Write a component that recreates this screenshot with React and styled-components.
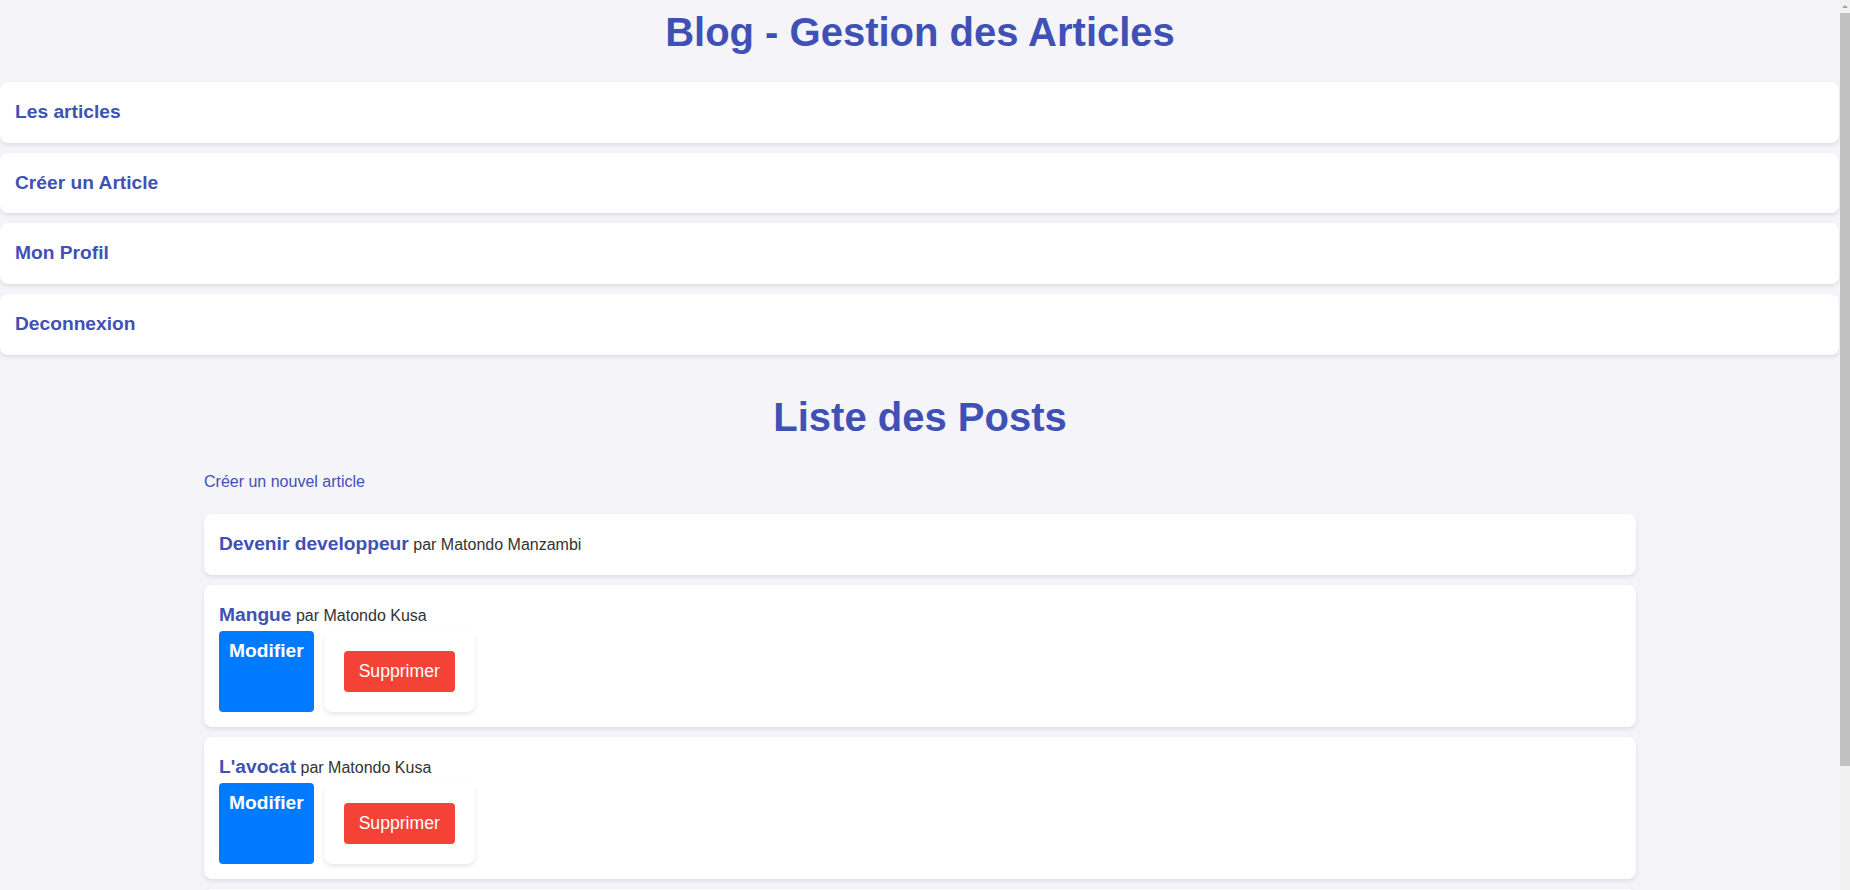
import React from "react";
import styled, { createGlobalStyle } from "styled-components";

const GlobalStyle = createGlobalStyle`
  html, body {
    margin: 0;
    padding: 0;
  }
  body {
    background: #f4f4f9;
    color: #333;
    font-family: "Liberation Sans", Arial, sans-serif;
    line-height: 1.6;
    padding-right: 10px;
  }
  * { box-sizing: border-box; }
`;

/* Drawing of the browser's vertical scrollbar, fixed at the right edge */
const ScrollRail = styled.div`
  position: fixed;
  top: 0;
  right: 0;
  width: 10px;
  height: 100vh;
  background: #f1f1f1;
  display: flex;
  flex-direction: column;
  align-items: center;
`;

const ScrollArrow = styled.div`
  height: 13px;
  width: 10px;
  display: flex;
  align-items: center;
  justify-content: center;

  &::before {
    content: "";
    border-left: 3px solid transparent;
    border-right: 3px solid transparent;
    border-bottom: 3px solid #a3a3a3;
  }
`;

const ScrollThumb = styled.div`
  width: 10px;
  height: 753px;
  background: #c1c1c1;
`;

const Header = styled.header`
  margin: 0 0 18px;
`;

const PageTitle = styled.h1`
  margin: 0;
  text-align: center;
  color: #3f51b5;
  font-size: 40px;
  font-weight: 700;
`;

const Nav = styled.nav`
  margin-right: 1px;
`;

const NavList = styled.ul`
  list-style: none;
  margin: 0;
  padding: 0;
  display: flex;
  flex-direction: column;
  gap: 10px;
`;

const Card = styled.li`
  background: #fff;
  padding: 15px;
  border-radius: 8px;
  box-shadow: 0 2px 4px rgba(0, 0, 0, 0.1);
`;

const NavLink = styled.a`
  color: #3f51b5;
  font-weight: 700;
  font-size: 19.2px;
  text-decoration: none;
`;

const Main = styled.main`
  width: 80%;
  margin: 30px auto 0;
  padding: 0 20px;
`;

const SectionTitle = styled.h2`
  margin: 0 0 20px;
  text-align: center;
  color: #3f51b5;
  font-size: 40px;
  font-weight: 700;
`;

const CreateLink = styled.a`
  display: block;
  margin-bottom: 20px;
  color: #3f51b5;
  font-size: 16px;
  text-decoration: none;
`;

const PostList = styled.ul`
  list-style: none;
  margin: 0;
  padding: 0;
  display: flex;
  flex-direction: column;
  gap: 10px;
`;

const PostHeading = styled.div`
  font-size: 16px;
`;

const PostTitle = styled.strong`
  color: #3f51b5;
  font-size: 19.2px;
  font-weight: 700;
`;

const Author = styled.span`
  color: #333;
`;

const Actions = styled.div`
  display: flex;
  gap: 10px;
`;

const EditLink = styled.a`
  display: block;
  background: #007bff;
  color: #fff;
  font-weight: 700;
  font-size: 19.2px;
  padding: 5px 10px;
  border-radius: 4px;
  text-decoration: none;
`;

const DeleteForm = styled.form`
  margin: 0;
  background: #fff;
  padding: 20px;
  border-radius: 8px;
  box-shadow: 0 2px 4px rgba(0, 0, 0, 0.1);
`;

const DeleteButton = styled.button`
  background: #f44336;
  color: #fff;
  border: none;
  border-radius: 4px;
  padding: 10px 15px;
  font-family: "Liberation Sans", Arial, sans-serif;
  font-size: 17.6px;
  line-height: normal;
  cursor: pointer;
`;

const navItems = ["Les articles", "Créer un Article", "Mon Profil", "Deconnexion"];

const posts = [
  { title: "Devenir developpeur", author: "Matondo Manzambi", own: false },
  { title: "Mangue", author: "Matondo Kusa", own: true },
  { title: "L'avocat", author: "Matondo Kusa", own: true },
  { title: "Le manioc", author: "Matondo Kusa", own: true },
];

export default function App() {
  return (
    <>
      <GlobalStyle />
      <Header>
        <PageTitle>Blog - Gestion des Articles</PageTitle>
      </Header>
      <Nav>
        <NavList>
          {navItems.map((item) => (
            <Card key={item}>
              <NavLink href="#">{item}</NavLink>
            </Card>
          ))}
        </NavList>
      </Nav>
      <Main>
        <SectionTitle>Liste des Posts</SectionTitle>
        <CreateLink href="#">Créer un nouvel article</CreateLink>
        <PostList>
          {posts.map((p) => (
            <Card key={p.title}>
              <PostHeading>
                <PostTitle>{p.title}</PostTitle> <Author>par {p.author}</Author>
              </PostHeading>
              {p.own && (
                <Actions>
                  <EditLink href="#">Modifier</EditLink>
                  <DeleteForm onSubmit={(e) => e.preventDefault()}>
                    <DeleteButton type="submit">Supprimer</DeleteButton>
                  </DeleteForm>
                </Actions>
              )}
            </Card>
          ))}
        </PostList>
      </Main>
      <ScrollRail aria-hidden="true">
        <ScrollArrow />
        <ScrollThumb />
      </ScrollRail>
    </>
  );
}
